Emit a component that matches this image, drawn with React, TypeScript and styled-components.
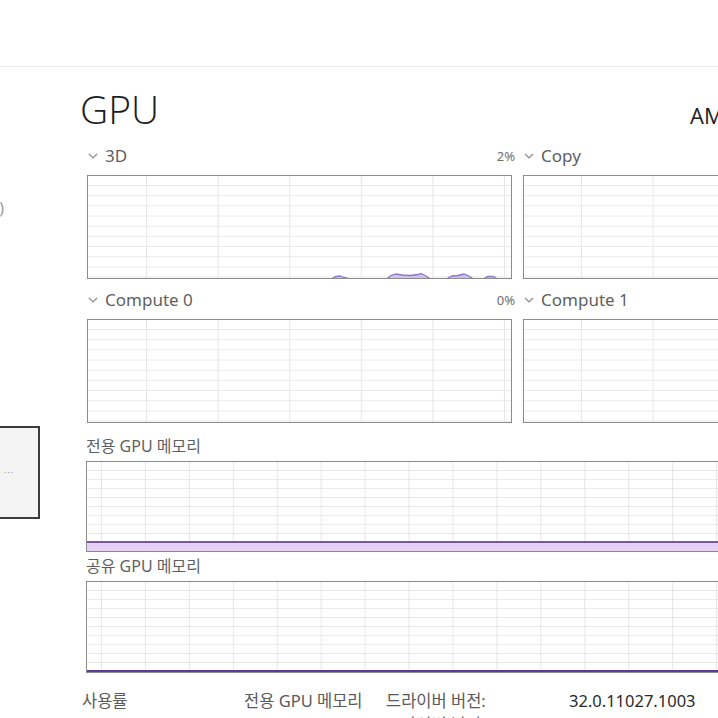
import React from "react";
import styled, { createGlobalStyle } from "styled-components";

const Global = createGlobalStyle`
  html, body { margin: 0; padding: 0; background: #ffffff; }
  body { font-family: "Noto Sans", "Noto Sans CJK KR", sans-serif; }
  * { box-sizing: border-box; }
`;

const Page = styled.div`
  width: 718px;
  height: 718px;
  overflow: hidden;
  background: #ffffff;
  display: flex;
  flex-direction: column;
`;

const Header = styled.div`
  height: 67px;
  flex: none;
  border-bottom: 1px solid #ececec;
`;

const Body = styled.div`
  display: flex;
  flex: 1;
  min-height: 0;
`;

const Sidebar = styled.div`
  width: 40px;
  flex: none;
  display: flex;
  flex-direction: column;
  padding-top: 130px;
`;

const SideItem = styled.div`
  height: 22px;
  display: flex;
  justify-content: flex-end;
  padding-right: 36px;
  white-space: nowrap;
  font-size: 16px;
  line-height: 22px;
  color: #9a9a9a;
`;

const SideSelected = styled.div`
  margin-top: 207px;
  margin-left: -12px;
  width: 52px;
  height: 93px;
  border: 2px solid #3c3c3c;
  background: #f4f4f4;
  display: flex;
  align-items: center;
  padding-left: 14px;
  font-size: 9px;
  color: #a0a0a0;
  letter-spacing: 1px;
`;

const Main = styled.div`
  margin-left: 40px;
  flex: none;
  width: 900px;
  display: flex;
  flex-direction: column;
`;

const TitleRow = styled.div`
  margin-top: 20px;
  display: grid;
  grid-template-columns: 610px auto;
  align-items: baseline;
`;

const Title = styled.div`
  font-family: "Open Sans", "Noto Sans", sans-serif;
  font-weight: 300;
  font-size: 39px;
  line-height: 44px;
  color: #1c1c1c;
`;

const Adapter = styled.div`
  font-family: "Open Sans", "Noto Sans", sans-serif;
  font-size: 22px;
  color: #222;
  white-space: nowrap;
`;

const EngineGrid = styled.div`
  margin-top: 14px;
  margin-left: 7px;
  display: grid;
  grid-template-columns: 425px 425px;
  column-gap: 11px;
  row-gap: 10px;
`;

const Panel = styled.div`
  display: flex;
  flex-direction: column;
`;

const LabelRow = styled.div`
  height: 22px;
  display: flex;
  align-items: center;
  justify-content: space-between;
  margin-bottom: 8px;
`;

const EngineName = styled.div`
  display: flex;
  align-items: center;
  gap: 7px;
  font-size: 17px;
  color: #5f5f5f;
  line-height: 22px;
  padding-left: 1px;
`;

const Percent = styled.div`
  font-size: 13px;
  color: #707070;
  margin-right: -3px;
`;

const Graph = styled.div<{
  $w: number;
  $h: number;
  $cx: number;
  $cy: number;
  $ox: number;
  $oy: number;
}>`
  position: relative;
  width: ${(p) => p.$w}px;
  height: ${(p) => p.$h}px;
  border: 1px solid #8c8c8c;
  background-color: #ffffff;
  background-image: linear-gradient(to right, #e6e6e6 1px, transparent 1px),
    linear-gradient(to bottom, #e9e9e9 1px, transparent 1px);
  background-size: ${(p) => p.$cx}px 100%, 100% ${(p) => p.$cy}px;
  background-position: ${(p) => p.$ox}px 0, 0 ${(p) => p.$oy}px;
  overflow: hidden;
`;

const Overlay = styled.svg`
  position: absolute;
  left: 0;
  top: 0;
  width: 100%;
  height: 100%;
`;

const MemFill = styled.div`
  position: absolute;
  left: 0;
  right: 0;
  bottom: 0;
  border-top: 2px solid #7a55ad;
  background: #e6d2f6;
`;

const MemBottom = styled.div`
  position: absolute;
  left: 0;
  right: 0;
  bottom: 0;
  height: 2px;
  background: #5e3a98;
`;

const MemSection = styled.div<{ $top: number }>`
  margin-top: ${(p) => p.$top}px;
  margin-left: 6px;
  display: flex;
  flex-direction: column;
`;

const MemLabel = styled.div`
  height: 22px;
  line-height: 22px;
  font-size: 16px;
  color: #5f5f5f;
  margin-bottom: 4px;
`;

const Stats = styled.div`
  margin-top: 17px;
  display: grid;
  grid-template-columns: 162px 142px 183px 200px;
  row-gap: 2px;
  font-size: 16.5px;
  line-height: 22px;
  color: #555;
  padding-left: 2px;
`;

const StatCell = styled.div<{ $dark?: boolean }>`
  white-space: nowrap;
  color: ${(p) => (p.$dark ? "#2a2a2a" : "#5a5a5a")};
`;

const Chevron = () => (
  <svg width="10" height="6" viewBox="0 0 10 6">
    <polyline points="1,1 5,5 9,1" fill="none" stroke="#8a8a8a" strokeWidth="1.2" />
  </svg>
);

const engines = [
  { name: "3D", pct: "2%", data: true },
  { name: "Copy", pct: "", data: false },
  { name: "Compute 0", pct: "0%", data: false },
  { name: "Compute 1", pct: "", data: false },
];

// 3D usage bumps (graph-local coords, width 423 x height 102)
const bumps = [
  "244,104 245,102 248,100.5 252,100 256,101.5 259,102 260,104",
  "299,104 300,102 303,99.5 308,98 314,99 322,99.5 330,98.5 333,97.5 337,99.5 341,102 342,104",
  "359,104 360,102 364,100 370,99.5 376,98 380,99.5 384,102 385,104",
  "396,104 397,102 400,100.5 405,100.5 408,102 409,104",
];

export default function App() {
  return (
    <Page>
      <Global />
      <Header />
      <Body>
        <Sidebar>
          <SideItem>디스크 0 (C:)</SideItem>
          <SideSelected>···</SideSelected>
        </Sidebar>
        <Main>
          <TitleRow>
            <Title>GPU</Title>
            <Adapter>AMD Radeon(TM) Graphics</Adapter>
          </TitleRow>
          <EngineGrid>
            {engines.map((e, i) => (
              <Panel key={e.name}>
                <LabelRow>
                  <EngineName>
                    <Chevron />
                    {e.name}
                  </EngineName>
                  <Percent>{e.pct}</Percent>
                </LabelRow>
                <Graph $w={425} $h={104} $cx={71.6} $cy={10.2} $ox={i % 2 === 0 ? 58 : 57} $oy={9}>
                  {e.data && (
                    <Overlay viewBox="0 0 423 102" preserveAspectRatio="none">
                      {bumps.map((b) => (
                        <polygon key={b} points={b} fill="#cfc3ee" stroke="#8b78c9" strokeWidth="1.3" />
                      ))}
                    </Overlay>
                  )}
                </Graph>
              </Panel>
            ))}
          </EngineGrid>
          <MemSection $top={12}>
            <MemLabel>전용 GPU 메모리</MemLabel>
            <Graph $w={720} $h={91} $cx={43.95} $cy={9} $ox={14} $oy={8}>
              <MemFill style={{ height: "10px" }} />
            </Graph>
          </MemSection>
          <MemSection $top={3}>
            <MemLabel>공유 GPU 메모리</MemLabel>
            <Graph $w={720} $h={92} $cx={43.95} $cy={9} $ox={14} $oy={8}>
              <MemBottom />
            </Graph>
          </MemSection>
          <Stats>
            <StatCell>사용률</StatCell>
            <StatCell>전용 GPU 메모리</StatCell>
            <StatCell>드라이버 버전:</StatCell>
            <StatCell $dark>32.0.11027.1003</StatCell>
            <StatCell>2%</StatCell>
            <StatCell>0.4/0.5GB</StatCell>
            <StatCell>드라이버 날짜:</StatCell>
            <StatCell $dark>2023-10-18</StatCell>
          </Stats>
        </Main>
      </Body>
    </Page>
  );
}
